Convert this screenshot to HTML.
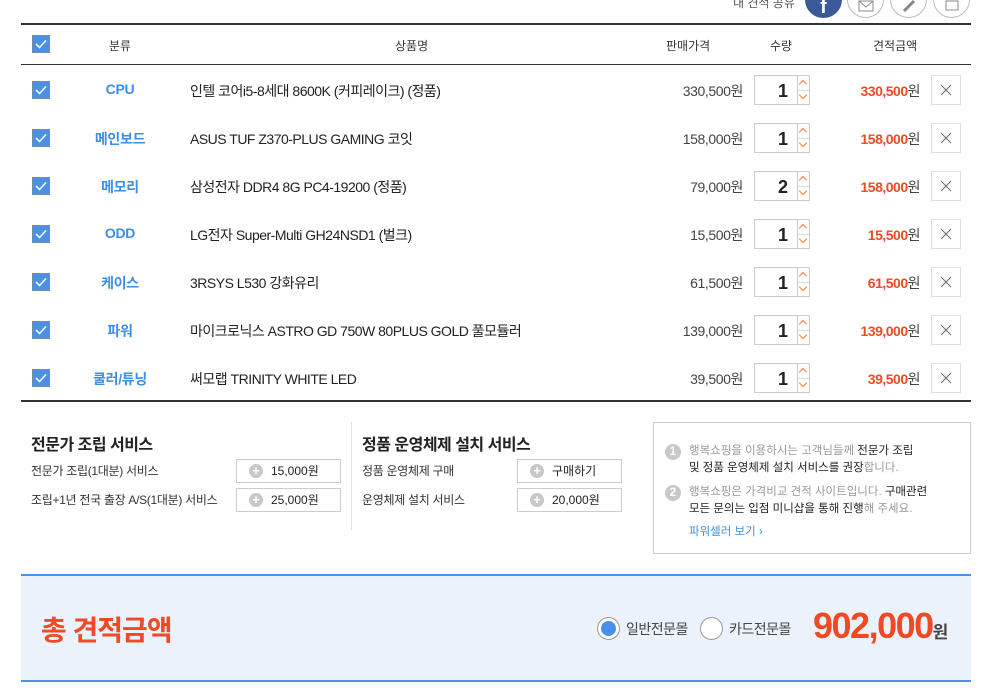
<!DOCTYPE html>
<html><head><meta charset="utf-8"><style>
*{margin:0;padding:0;box-sizing:border-box}
body{width:983px;height:698px;overflow:hidden;background:#fff;font-family:"Liberation Sans","Noto Sans CJK KR",sans-serif;color:#222;position:relative}
.a{position:absolute}
.cb{position:absolute;left:32px;width:18px;height:18px;background:#4a8fe8;border:1px solid #7a8aa0}
.cb svg{position:absolute;left:2px;top:3px}
.cat{position:absolute;left:70px;width:100px;text-align:center;color:#3c8ee6;font-size:14px;font-weight:bold;letter-spacing:-0.3px}
.nm{position:absolute;left:190px;font-size:14px;color:#222;letter-spacing:-0.5px}
.pr{position:absolute;right:240px;font-size:14px;color:#444;letter-spacing:-0.4px}
.qty{position:absolute;left:754px;width:44px;height:30px;border:1px solid #ccc;font-size:18px;font-weight:bold;text-align:center;line-height:30px;padding-left:14px}
.ar{position:absolute;left:798px;width:12px;height:30px;border:1px solid #ccc;border-left:none}
.ar i{position:absolute;left:2px;width:6px;height:6px;border-left:1px solid #f0843c;border-top:1px solid #f0843c}
.am{position:absolute;right:63px;font-size:14px;color:#f04923;font-weight:bold;letter-spacing:-0.5px}
.am span{color:#444;font-weight:normal}
.x{position:absolute;left:931px;width:30px;height:30px;border:1px solid #ddd}
.h{position:absolute;top:37px;font-size:12px;color:#333}
.sb{position:absolute;width:105px;height:24px;border:1px solid #ccc;font-size:12px;line-height:22px;padding-left:34px}
.sb:before{content:"+";position:absolute;left:12px;top:4px;width:14px;height:14px;border-radius:50%;background:#c8c8c8;color:#fff;font-size:13px;line-height:14px;text-align:center;font-weight:bold}
.sl{position:absolute;font-size:12px;color:#333;letter-spacing:-0.3px}
.ic{position:absolute;top:-19px;width:37px;height:37px;border-radius:50%;border:1px solid #bbb;background:#fff}
.ic svg{position:absolute;left:10px;top:18px}
</style></head><body>
<div class="a" style="left:733px;top:-6px;font-size:12px;color:#555">내 견적 공유</div>
<div class="ic" style="left:805px;background:#3b5998;border-color:#3b5998;color:#fff;font-weight:bold;text-align:center;font-size:20px;line-height:50px">f</div>
<div class="ic" style="left:847px"><svg width="16" height="12"><rect x="1" y="1" width="14" height="10" fill="none" stroke="#888"/><path d="M1 1l7 6 7-6" stroke="#888" fill="none"/></svg></div>
<div class="ic" style="left:890px"><svg width="16" height="12"><path d="M3 11l10-10" stroke="#888" stroke-width="3" fill="none"/></svg></div>
<div class="ic" style="left:933px"><svg width="16" height="12"><rect x="2" y="1" width="12" height="9" fill="none" stroke="#888"/></svg></div>
<div class="a" style="left:21px;top:23px;width:950px;height:2px;background:#333"></div>
<div class="a" style="left:21px;top:64px;width:950px;height:1px;background:#333"></div>
<div class="cb" style="top:35px"><svg width="12" height="10"><path d="M1 5l3.5 3.5L11 1.5" stroke="#fff" stroke-width="1.6" fill="none"/></svg></div>
<div class="h" style="left:109px">분류</div>
<div class="h" style="left:395px">상품명</div>
<div class="h" style="left:666px">판매가격</div>
<div class="h" style="left:770px">수량</div>
<div class="h" style="left:873px">견적금액</div>

<div id="rows"></div>
<script>
var d=[["CPU","인텔 코어i5-8세대 8600K (커피레이크) (정품)","330,500","1","330,500"],
["메인보드","ASUS TUF Z370-PLUS GAMING 코잇","158,000","1","158,000"],
["메모리","삼성전자 DDR4 8G PC4-19200 (정품)","79,000","2","158,000"],
["ODD","LG전자 Super-Multi GH24NSD1 (벌크)","15,500","1","15,500"],
["케이스","3RSYS L530 강화유리","61,500","1","61,500"],
["파워","마이크로닉스 ASTRO GD 750W 80PLUS GOLD 풀모듈러","139,000","1","139,000"],
["쿨러/튜닝","써모랩 TRINITY WHITE LED","39,500","1","39,500"]];
var h="";
d.forEach(function(r,i){var c=90+48*i;
h+='<div class="cb" style="top:'+(c-9)+'px"><svg width="12" height="10"><path d="M1 5l3.5 3.5L11 1.5" stroke="#fff" stroke-width="1.6" fill="none"/></svg></div>';
h+='<div class="cat" style="top:'+(c-9)+'px">'+r[0]+'</div>';
h+='<div class="nm" style="top:'+(c-9)+'px">'+r[1]+'</div>';
h+='<div class="pr" style="top:'+(c-9)+'px">'+r[2]+'원</div>';
h+='<div class="qty" style="top:'+(c-15)+'px">'+r[3]+'</div>';
h+='<div class="ar" style="top:'+(c-15)+'px"><i style="top:5px;transform:rotate(45deg)"></i><i style="top:16px;transform:rotate(225deg)"></i><b style="position:absolute;left:0;top:14px;width:11px;height:1px;background:#ddd"></b></div>';
h+='<div class="am" style="top:'+(c-9)+'px">'+r[4]+'<span>원</span></div>';
h+='<div class="x" style="top:'+(c-15)+'px"><svg width="28" height="28"><path d="M9 9l10 10M19 9L9 19" stroke="#666" stroke-width="1"/></svg></div>';});
document.getElementById("rows").innerHTML=h;
</script>
<div class="a" style="left:21px;top:400px;width:950px;height:2px;background:#333"></div>

<div class="a" style="left:31px;top:431px;font-size:16px;font-weight:bold;letter-spacing:-0.5px">전문가 조립 서비스</div>
<div class="sl" style="left:31px;top:462px">전문가 조립(1대분) 서비스</div>
<div class="sl" style="left:31px;top:491px">조립+1년 전국 출장 A/S(1대분) 서비스</div>
<div class="sb" style="left:236px;top:459px">15,000원</div>
<div class="sb" style="left:236px;top:488px">25,000원</div>
<div class="a" style="left:351px;top:422px;width:1px;height:108px;background:#e3e3e3"></div>
<div class="a" style="left:362px;top:431px;font-size:16px;font-weight:bold;letter-spacing:-0.5px">정품 운영체제 설치 서비스</div>
<div class="sl" style="left:362px;top:462px">정품 운영체제 구매</div>
<div class="sl" style="left:362px;top:491px">운영체제 설치 서비스</div>
<div class="sb" style="left:517px;top:459px">구매하기</div>
<div class="sb" style="left:517px;top:488px">20,000원</div>

<div class="a" style="left:653px;top:422px;width:318px;height:132px;border:1px solid #ccc;font-size:11.5px;line-height:17px;color:#999">
<div class="a" style="left:11px;top:21px;width:16px;height:16px;border-radius:50%;background:#c8c8c8;color:#fff;font-weight:bold;text-align:center;line-height:16px">1</div>
<div class="a" style="left:35px;top:20px;width:280px">행복쇼핑을 이용하시는 고객님들께 <span style="color:#222">전문가 조립<br>및 정품 운영체제 설치 서비스를 권장</span>합니다.</div>
<div class="a" style="left:11px;top:62px;width:16px;height:16px;border-radius:50%;background:#c8c8c8;color:#fff;font-weight:bold;text-align:center;line-height:16px">2</div>
<div class="a" style="left:35px;top:61px;width:280px">행복쇼핑은 가격비교 견적 사이트입니다. <span style="color:#222">구매관련<br>모든 문의는 입점 미니샵을 통해 진행</span>해 주세요.</div>
<div class="a" style="left:35px;top:101px;color:#3c8ee6">파워셀러 보기 ›</div>
</div>

<div class="a" style="left:21px;top:574px;width:950px;height:108px;background:#ebf2fc;border-top:2px solid #4a8fe8;border-bottom:2px solid #4a8fe8"></div>
<div class="a" style="left:41px;top:609px;font-size:28px;font-weight:bold;color:#f04923;letter-spacing:-1px">총 견적금액</div>
<div class="a" style="left:597px;top:617px;width:23px;height:23px;border-radius:50%;border:1px solid #999;background:#fff"><div style="margin:3px;width:15px;height:15px;border-radius:50%;background:#4a8fe8"></div></div>
<div class="a" style="left:626px;top:619px;font-size:14px;color:#444;letter-spacing:-0.5px">일반전문몰</div>
<div class="a" style="left:700px;top:617px;width:23px;height:23px;border-radius:50%;border:1px solid #999;background:#fff"></div>
<div class="a" style="left:729px;top:619px;font-size:14px;color:#444;letter-spacing:-0.5px">카드전문몰</div>
<div class="a" style="left:813px;top:605px;font-size:36px;font-weight:bold;color:#f04923;letter-spacing:-1.5px">902,000<span style="font-size:17px;color:#444;letter-spacing:0">원</span></div>
</body></html>
